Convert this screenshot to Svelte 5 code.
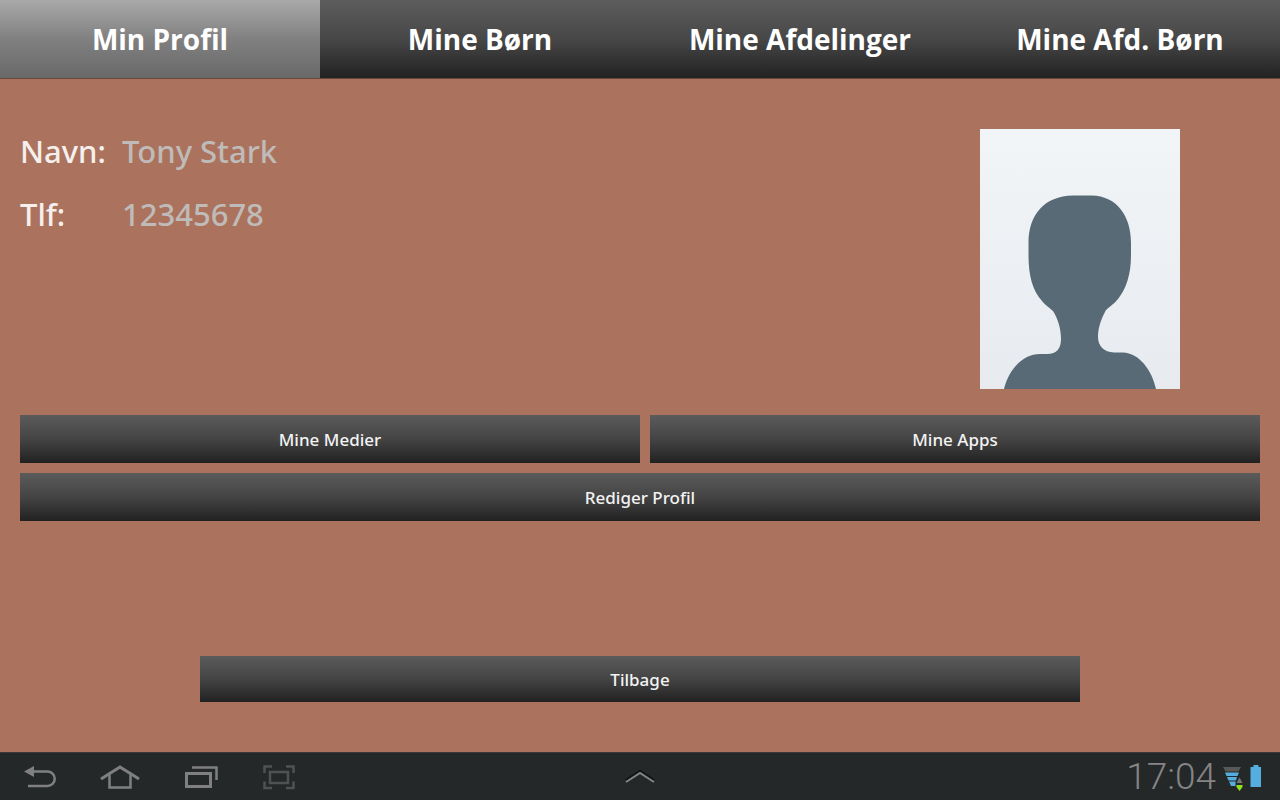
<script>
  const tabs = ['Min Profil', 'Mine Børn', 'Mine Afdelinger', 'Mine Afd. Børn'];
  let active = $state(0);
</script>

<div class="screen">
  <nav class="tabs">
    {#each tabs as tab, i}
      <button type="button" class="tab" class:active={active === i} onclick={() => (active = i)}>{tab}</button>
    {/each}
  </nav>

  <main>
    <section class="profile">
      <dl>
        <dt>Navn:</dt>
        <dd>Tony Stark</dd>
        <dt>Tlf:</dt>
        <dd>12345678</dd>
      </dl>
      <svg class="photo" viewBox="0 0 200 260" aria-hidden="true">
        <defs>
          <linearGradient id="backdrop" x1="0" y1="0" x2="0" y2="1">
            <stop offset="0" stop-color="#f2f5f7" />
            <stop offset="1" stop-color="#e7ebf0" />
          </linearGradient>
        </defs>
        <rect width="200" height="260" fill="url(#backdrop)" />
        <path
          fill="#596a77"
          d="M24 260C29 240 43 225 60 225H67C77 225 81 219 81 210C81 200 78 190 73 182C70 179 66 177 62 172C53 162 48.500 148 48.500 126V114C48.500 86 64 67 93 66.500H112C136 67 151 86 151 114V126C151 146 146 160 138 170C134 175 129 178 126 181C121 190 118 199 118 208C118 217 124 223 134 223.500H143C159 224 172 241 176 260Z"
        />
      </svg>
    </section>

    <section class="actions">
      <button type="button" class="action">Mine Medier</button>
      <button type="button" class="action second">Mine Apps</button>
      <button type="button" class="action wide">Rediger Profil</button>
    </section>

    <button type="button" class="action back">Tilbage</button>
  </main>

  <footer>
    <div class="keys">
      <button type="button" class="key" aria-label="Back">
        <svg width="40" height="32" viewBox="0 0 40 32" fill="none" stroke="#808080" stroke-width="2.500">
          <path d="M12 10.500H27.500A7.250 7.250 0 0 1 27.500 25H8" />
          <path d="M4 10.500L14 5V16Z" fill="#808080" stroke="none" />
        </svg>
      </button>
      <button type="button" class="key" aria-label="Home">
        <svg width="40" height="32" viewBox="0 0 40 32" fill="none" stroke="#808080" stroke-width="2.500">
          <path d="M1 18L20 6L39 18" stroke-width="3" />
          <path d="M9.500 14V26.500H30.500V14" />
        </svg>
      </button>
      <button type="button" class="key" aria-label="Recent apps">
        <svg width="40" height="32" viewBox="0 0 40 32" fill="none" stroke="#808080">
          <rect x="6.500" y="12.500" width="24" height="13" stroke-width="3" />
          <path d="M12 6.500H36.500V19" stroke-width="2.500" />
        </svg>
      </button>
      <button type="button" class="key" aria-label="Screenshot">
        <svg width="40" height="32" viewBox="0 0 40 32" fill="none" stroke="#505252" stroke-width="2.500">
          <path d="M4.500 12V5.500H12M26 5.500H33.500V12M33.500 20.500V27H26M12 27H4.500V20.500" />
          <rect x="10" y="11" width="18" height="11" />
        </svg>
      </button>
    </div>

    <button type="button" class="key" aria-label="Open tray">
      <svg width="40" height="32" viewBox="0 0 40 32" fill="none">
        <path d="M5 19L19 10L33 19" stroke="#101112" stroke-width="2" />
        <path d="M5 21L19 12L33 21" stroke="#858585" stroke-width="2" />
      </svg>
    </button>

    <div class="status">
      <span class="clock">17:04</span>
      <svg width="22" height="28" viewBox="0 0 22 28" aria-hidden="true">
        <path d="M1 4H19L16.500 8.500H3.500Z" fill="#585858" />
        <path d="M3 9.500H17L15.500 13H4.500Z M5 14H15L14 17.500H6.500Z M7 18.500H13.500V23H9Z" fill="#55ade0" />
        <path d="M14.500 20L17.500 14.500L20.500 20Z" fill="#777" />
        <path d="M14.500 22H20.500V24L17.500 28L14.500 24Z" fill="#91e01d" />
      </svg>
      <svg width="12" height="28" viewBox="0 0 12 28" aria-hidden="true">
        <path d="M.500 4H3.500V2H8.500V4H11V24H.500Z" fill="#55ade0" />
      </svg>
    </div>
  </footer>
</div>

<style>
  :global(body) {
    margin: 0;
  }
  .screen {
    display: flex;
    flex-direction: column;
    min-height: 100vh;
    background: #ab735d;
    font-family: 'Noto Sans', 'Open Sans', sans-serif;
  }
  button {
    margin: 0;
    padding: 0;
    border: 0;
    font-family: inherit;
    cursor: pointer;
  }
  .tabs {
    display: grid;
    grid-template-columns: repeat(4, 1fr);
    background: linear-gradient(#5d5d5d, #474747 50%, #222);
    border-bottom: 1px solid #6b4638;
  }
  .tab {
    height: 78px;
    background: transparent;
    color: #fff;
    font-family: 'Open Sans', 'Noto Sans', sans-serif;
    font-size: 28px;
    font-weight: 700;
  }
  .tab.active {
    background: linear-gradient(#a9a9a9, #808080 50%, #696969);
  }
  main {
    flex: 1;
    display: flex;
    flex-direction: column;
    padding: 50px 20px;
  }
  .profile {
    display: flex;
    justify-content: space-between;
    align-items: flex-start;
    padding-right: 80px;
  }
  dl {
    display: grid;
    grid-template-columns: 102px auto;
    grid-auto-rows: 63px;
    margin: 0;
    font-size: 31px;
    font-weight: 500;
    line-height: 44px;
  }
  dt {
    color: #f5efed;
  }
  dd {
    margin: 0;
    color: #bfbbb9;
  }
  .photo {
    width: 200px;
    height: 260px;
  }
  .actions {
    display: grid;
    grid-template-columns: 1fr 1fr;
    row-gap: 10px;
    margin-top: 26px;
  }
  .action {
    height: 48px;
    background: linear-gradient(#5b5b5b, #444 50%, #212121);
    color: #f3f3f3;
    font-size: 17px;
    font-weight: 500;
  }
  .second {
    margin-left: 10px;
  }
  .wide {
    grid-column: 1 / -1;
  }
  .back {
    height: 46px;
    margin: auto 180px 0;
  }
  footer {
    display: grid;
    grid-template-columns: 1fr auto 1fr;
    align-items: center;
    box-sizing: border-box;
    height: 48px;
    padding: 0 18px 0 20px;
    background: #242829;
    border-top: 1px solid #3c3838;
  }
  .keys {
    display: flex;
    gap: 40px;
  }
  .key {
    display: flex;
    background: transparent;
  }
  .status {
    display: flex;
    justify-content: flex-end;
    align-items: center;
    gap: 6px;
  }
  .clock {
    color: #858585;
    font-family: Roboto, sans-serif;
    font-size: 37px;
    font-weight: 300;
    line-height: 46px;
  }
</style>
